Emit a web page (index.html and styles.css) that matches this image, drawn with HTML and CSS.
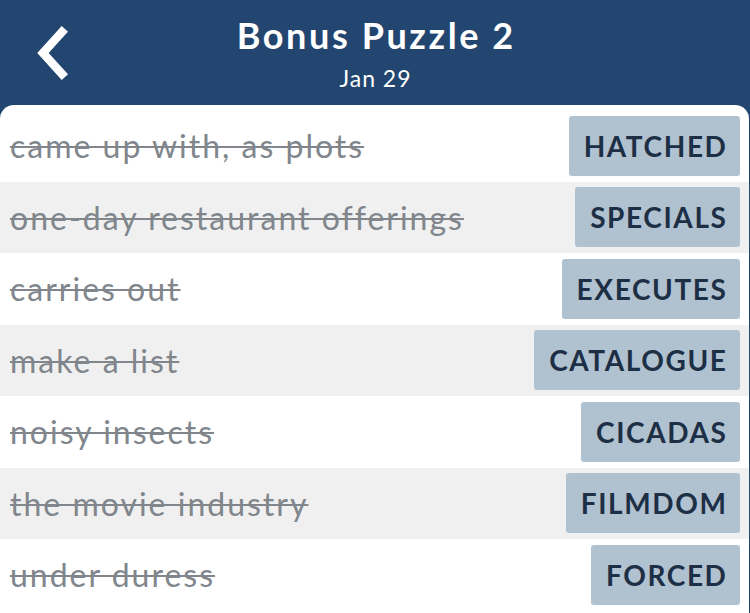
FILE: index.html
```html
<!DOCTYPE html>
<html>
<head>
<meta charset="utf-8">
<link rel="stylesheet" href="styles.css">
</head>
<body>
<div class="app">
  <header class="header">
    <button class="back" aria-label="Back">
      <svg width="40" height="56" viewBox="0 0 40 56"><path d="M30 7 L11 28 L30 49" fill="none" stroke="#fff" stroke-width="8.5" stroke-linecap="square" stroke-linejoin="miter"/></svg>
    </button>
    <div class="titles">
      <div class="title">Bonus Puzzle 2</div>
      <div class="date">Jan 29</div>
    </div>
  </header>
  <main class="card">
    <div class="row"><span class="clue">came up with, as plots</span><span class="answer">HATCHED</span></div>
    <div class="row alt"><span class="clue">one-day restaurant offerings</span><span class="answer">SPECIALS</span></div>
    <div class="row"><span class="clue">carries out</span><span class="answer">EXECUTES</span></div>
    <div class="row alt"><span class="clue">make a list</span><span class="answer">CATALOGUE</span></div>
    <div class="row"><span class="clue">noisy insects</span><span class="answer">CICADAS</span></div>
    <div class="row alt"><span class="clue">the movie industry</span><span class="answer">FILMDOM</span></div>
    <div class="row"><span class="clue">under duress</span><span class="answer">FORCED</span></div>
  </main>
</div>
</body>
</html>
```
FILE: styles.css
```css
html, body {
  margin: 0;
  padding: 0;
  background: #224670;
  font-family: "Lato", "Noto Sans", sans-serif;
}
.app {
  width: 750px;
  height: 613px;
  overflow: hidden;
  background: #224670;
  display: flex;
  flex-direction: column;
}
.header {
  height: 105px;
  flex: none;
  position: relative;
  display: flex;
  justify-content: center;
  align-items: flex-start;
}
.back {
  position: absolute;
  left: 32px;
  top: 25px;
  background: none;
  border: 0;
  padding: 0;
  cursor: pointer;
}
.titles {
  text-align: center;
  color: #fff;
  padding-top: 11px;
}
.title {
  font-size: 36px;
  font-weight: 700;
  line-height: 48px;
  letter-spacing: 2.6px;
  margin-right: -2.6px;
}
.date {
  font-size: 23px;
  line-height: 30px;
  margin-top: 4px;
  letter-spacing: 1px;
  margin-right: -1px;
}
.card {
  flex: 1;
  background: #fff;
  border-radius: 14px 14px 0 0;
  padding-top: 5px;
  margin-right: 1px;
}
.row {
  height: 71.5px;
  display: flex;
  align-items: center;
  justify-content: space-between;
  padding: 0 9px 0 10px;
}
.row.alt {
  background: #f0f0f0;
}
.clue {
  font-size: 32px;
  letter-spacing: 2px;
  color: #80868c;
  text-decoration: line-through;
  text-decoration-thickness: 2px;
  text-decoration-color: #80868c;
}
.answer {
  height: 60px;
  display: flex;
  align-items: center;
  padding: 0 12.5px 0 15px;
  background: #b0c1d0;
  border-radius: 3px;
  color: #1d2f45;
  font-size: 28px;
  font-weight: 700;
  letter-spacing: 1.6px;
}
```
